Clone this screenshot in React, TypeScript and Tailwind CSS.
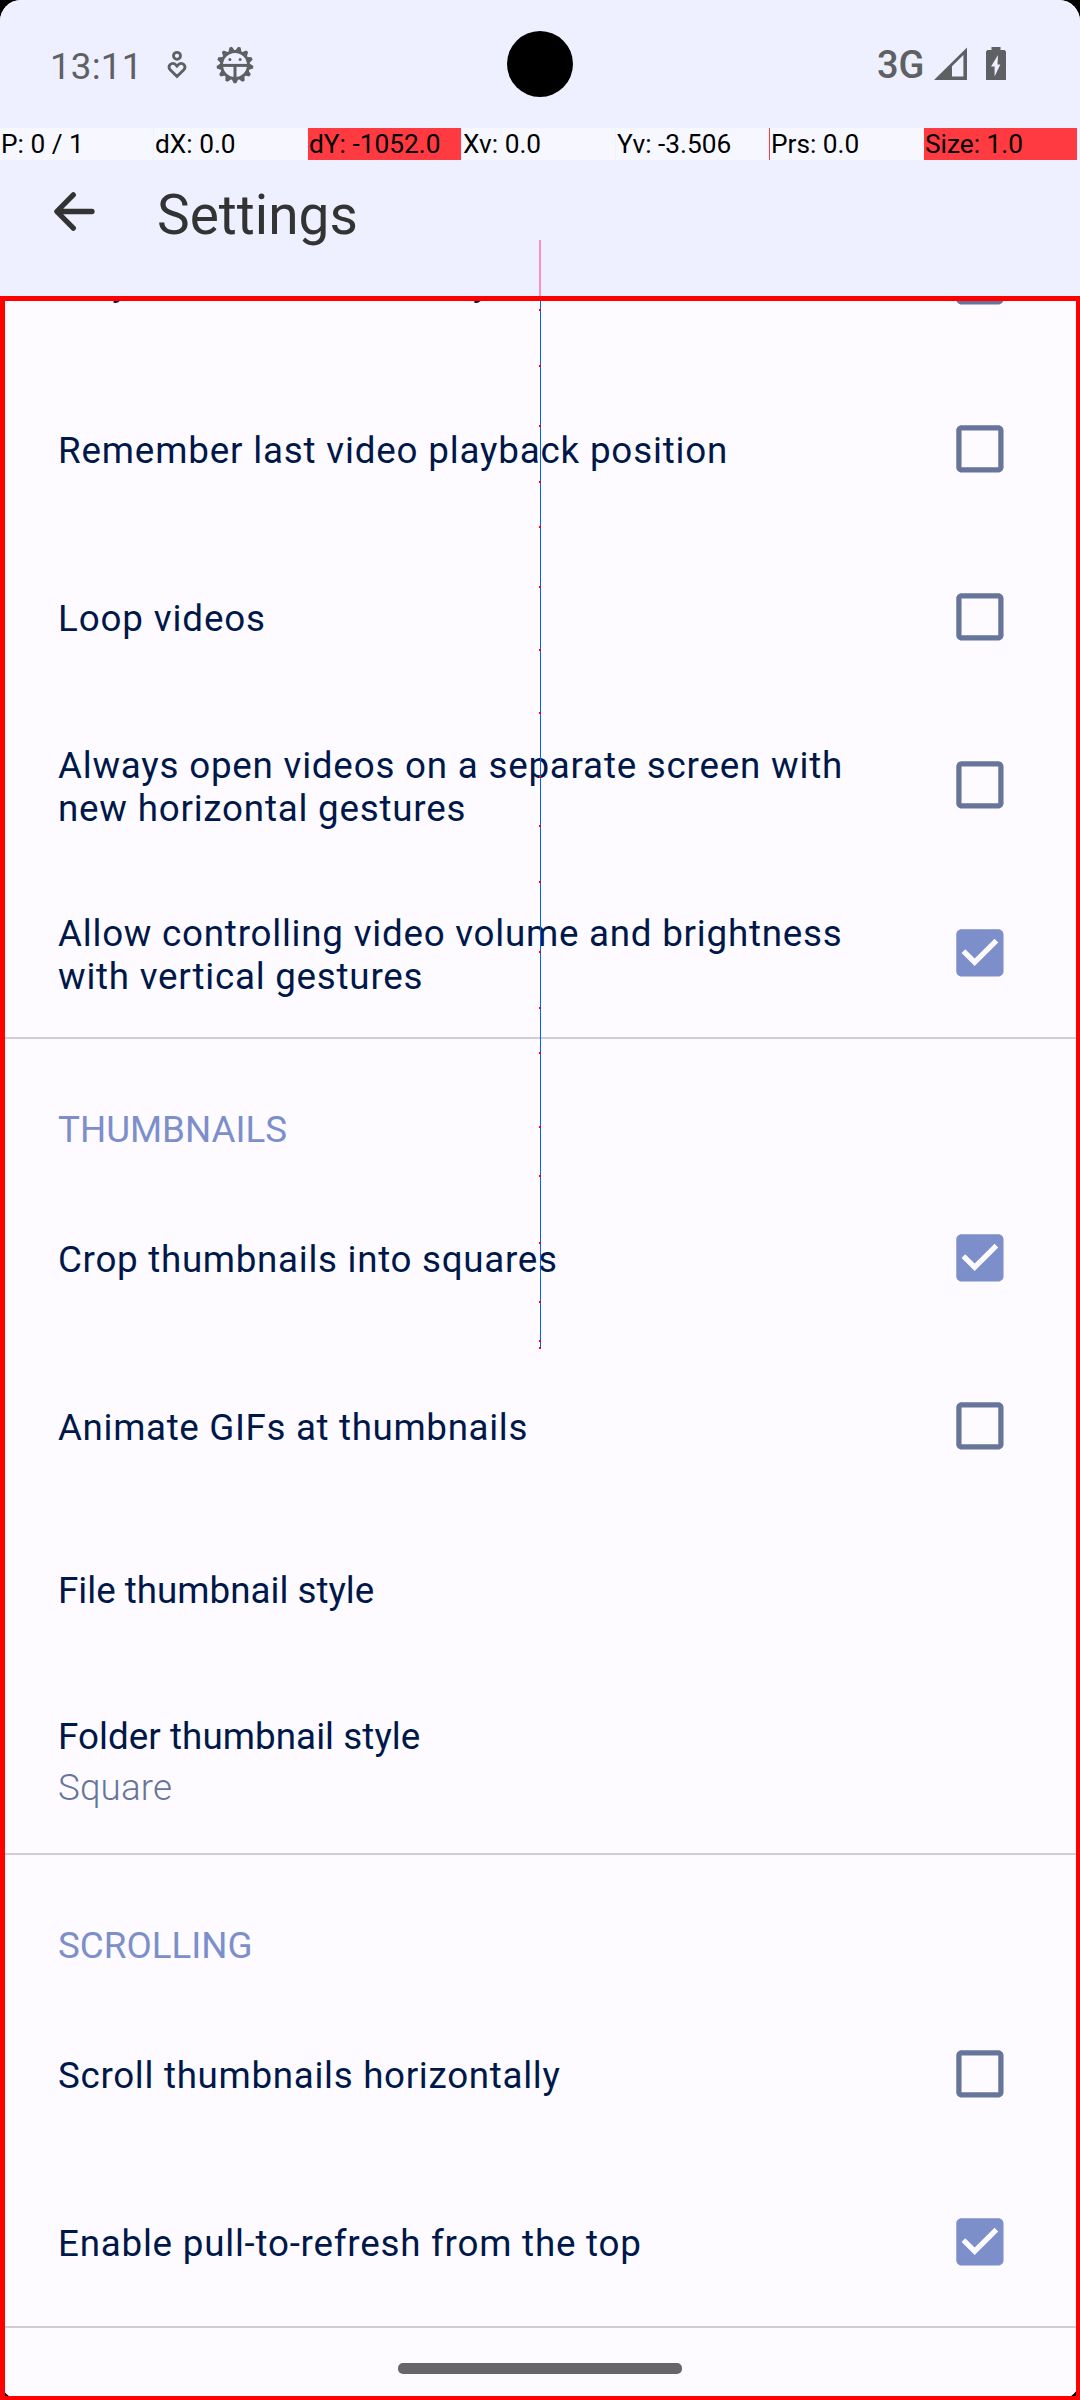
import React from 'react';

type Option = { lines: string[]; checked: boolean; spacing: string };

const videoOptions: Option[] = [
  { lines: ['Play videos automatically'], checked: false, spacing: 'tracking-[0.72px]' },
  { lines: ['Remember last video playback position'], checked: false, spacing: 'tracking-[0.82px]' },
  { lines: ['Loop videos'], checked: false, spacing: 'tracking-[0.87px]' },
  {
    lines: ['Always open videos on a separate screen with', 'new horizontal gestures'],
    checked: false,
    spacing: 'tracking-[0.78px]',
  },
  {
    lines: ['Allow controlling video volume and brightness', 'with vertical gestures'],
    checked: true,
    spacing: 'tracking-[0.76px]',
  },
];

const thumbnailOptions: Option[] = [
  { lines: ['Crop thumbnails into squares'], checked: true, spacing: 'tracking-[0.7px]' },
  { lines: ['Animate GIFs at thumbnails'], checked: false, spacing: 'tracking-[0.65px]' },
];

const scrollingOptions: Option[] = [
  { lines: ['Scroll thumbnails horizontally'], checked: false, spacing: 'tracking-[0.69px]' },
  { lines: ['Enable pull-to-refresh from the top'], checked: true, spacing: 'tracking-[0.77px]' },
];

const readings = [
  { text: 'P: 0 / 1', hot: false },
  { text: 'dX: 0.0', hot: false },
  { text: 'dY: -1052.0', hot: true },
  { text: 'Xv: 0.0', hot: false },
  { text: 'Yv: -3.506', hot: false },
  { text: 'Prs: 0.0', hot: false },
  { text: 'Size: 1.0', hot: true },
];

// Sample positions along the pointer trail, in screen pixels.
const trail = [
  310, 366, 426, 482, 527, 587, 650, 713, 777, 826, 882, 952, 1008, 1053, 1127, 1176, 1243, 1302, 1341, 1348,
];

function gearPath() {
  const teeth = 13;
  const points: string[] = [];
  for (let i = 0; i < teeth; i++) {
    const centre = Math.PI / 2 + (i * 2 * Math.PI) / teeth;
    for (const [offset, radius] of [
      [-0.2, 15],
      [-0.07, 18.4],
      [0.07, 18.4],
      [0.2, 15],
    ]) {
      points.push(
        `${(19 + radius * Math.cos(centre + offset)).toFixed(2)} ${(19 + radius * Math.sin(centre + offset)).toFixed(2)}`,
      );
    }
  }
  return `M${points.join('L')}Z`;
}

function Checkbox({ checked }: { checked: boolean }) {
  return (
    <svg
      viewBox="-0.152 -0.152 24.381 24.381"
      className={checked ? 'size-16 shrink-0 fill-[#7c8fca]' : 'size-16 shrink-0 fill-[#667599]'}
    >
      <path
        d={
          checked
            ? 'M19 3H5c-1.11 0-2 .9-2 2v14c0 1.1.89 2 2 2h14c1.11 0 2-.9 2-2V5c0-1.1-.89-2-2-2zm-9 14l-5-5 1.41-1.41L10 14.17l7.59-7.59L19 8l-9 9z'
            : 'M19 5v14H5V5h14m0-2H5c-1.1 0-2 .9-2 2v14c0 1.1.9 2 2 2h14c1.1 0 2-.9 2-2V5c0-1.1-.9-2-2-2z'
        }
      />
    </svg>
  );
}

function OptionRow({ lines, checked, spacing }: Option) {
  return (
    <label className="flex h-[168px] items-center justify-between pr-[68px] pl-[58px]">
      <span className={`pt-[3px] whitespace-nowrap ${spacing}`}>
        {lines.map((line) => (
          <span key={line} className="block">
            {line}
          </span>
        ))}
      </span>
      <Checkbox checked={checked} />
    </label>
  );
}

function SectionTitle({ children }: { children: string }) {
  return <h2 className="h-[135px] pt-[69px] pl-[58px] text-[#7c8fca]">{children}</h2>;
}

function Divider() {
  return <div className="h-[2px] bg-[#cfced2]" />;
}

function StatusBar() {
  return (
    <div className="relative flex h-32 items-start text-[36.75px] leading-[43px] text-[#5f6064]">
      <span className="mt-[45px] ml-[50px] tracking-[0.2px]">13:11</span>
      <svg className="mt-[50px] ml-[23.5px] h-[30px] w-[22px]" viewBox="0 0 22 30" fill="none" stroke="#5f6064" strokeWidth="2.8">
        <circle cx="11" cy="5.8" r="3.5" />
        <path d="M11 26.6l-6.8-6.8a4 4 0 0 1 0-5.3c1.6-1.6 4-1.5 5.4.1L11 16.2l1.4-1.6c1.4-1.6 3.8-1.7 5.4-.1a4 4 0 0 1 0 5.3z" />
      </svg>
      <svg className="mt-[46px] ml-[28px] size-[38px]" viewBox="0 0 38 38">
        <path d={gearPath()} fill="#5f6064" />
        <circle cx="19" cy="19" r="12" fill="#eef0ff" />
        <rect x="5" y="17.9" width="28" height="3" fill="#5f6064" />
        <rect x="17.5" y="20" width="3" height="13" fill="#5f6064" />
        <circle cx="13.9" cy="13.4" r="1.5" fill="#5f6064" />
        <circle cx="24.1" cy="13.4" r="1.5" fill="#5f6064" />
      </svg>
      <div className="absolute top-[31px] left-[507px] size-[66px] rounded-full bg-black" />
      <span className="mt-[44px] ml-auto text-[38px] font-medium">3G</span>
      <svg className="mt-[47px] ml-[9.5px] h-[33px] w-[33px]" viewBox="0 0 33 33" fill="#5f6064" fillRule="evenodd">
        <path d="M0 33L33 0.5V33zM18 19.3V29.5H29.4V8z" />
      </svg>
      <svg className="mt-[47px] mr-[74px] ml-[19px] h-[33px] w-5" viewBox="0 0 20 33" fill="#5f6064" fillRule="evenodd">
        <path d="M5.5 0h9v3H18.5L20 4.5V33H0V4.5L1.5 3H5.5zM12 8L5 19.5H8.6V29.5L14.3 17.5H11.5z" />
      </svg>
    </div>
  );
}

function PointerReadout() {
  return (
    <div className="flex h-8 gap-px text-[26.25px] leading-8 text-black">
      {readings.map(({ text, hot }) => (
        <div
          key={text}
          className={
            hot
              ? 'w-[153px] bg-[#ff3a40] pl-[1px] whitespace-nowrap'
              : 'w-[153px] bg-[#f7f8ff] pl-[1px] whitespace-nowrap'
          }
        >
          {text}
        </div>
      ))}
    </div>
  );
}

function PointerTrail() {
  return (
    <>
      <div className="absolute top-[240px] left-[539px] h-[56px] w-[2px] bg-[#fb90bf]" />
      <div className="absolute top-[301px] left-[540px] h-[1046px] w-px bg-[#0060ff]" />
      {trail.map((y) => (
        <div key={y} className="absolute left-[539px] size-[2px] bg-[#ff0000]" style={{ top: y - 1 }} />
      ))}
      <div className="absolute top-[128px] left-[769px] h-8 w-px bg-[#ff3a40]" />
    </>
  );
}

export default function App() {
  return (
    <div className="relative h-[2400px] w-[1080px] overflow-hidden bg-black font-['Roboto',sans-serif]">
      <div className="flex h-full flex-col overflow-hidden rounded-[21px] bg-[#fdfbff]">
        <header className="h-[296px] shrink-0 bg-[#eef0ff]">
          <StatusBar />
          <PointerReadout />
          <div className="flex h-[110px] items-center pl-[52px]">
            <svg
              className="-mt-[8px] size-[46px]"
              viewBox="0 0 46 46"
              fill="none"
              stroke="#333333"
              strokeWidth="5.3"
              strokeLinecap="round"
              strokeLinejoin="round"
            >
              <path d="M40 23.5H5M21.3 6.8L4.8 23.5l16.5 16.7" />
            </svg>
            <h1 className="ml-[59px] text-[55px] leading-[64px] text-[#333333]">Settings</h1>
          </div>
        </header>
        <main className="min-h-0 flex-1 overflow-hidden text-[36.75px] leading-[43px] text-[#001849]">
          <div className="-mt-[99px]">
            {videoOptions.map((o) => (
              <OptionRow key={o.lines[0]} {...o} />
            ))}
            <Divider />
            <SectionTitle>THUMBNAILS</SectionTitle>
            {thumbnailOptions.map((o) => (
              <OptionRow key={o.lines[0]} {...o} />
            ))}
            <div className="h-[161px] pt-[59px] pl-[58px]">File thumbnail style</div>
            <div className="flex h-[182px] flex-col gap-[8px] pt-[44px] pl-[58px]">
              <span className="tracking-[0.06px]">Folder thumbnail style</span>
              <span className="font-light tracking-[0.15px] text-[#667599]">Square</span>
            </div>
            <Divider />
            <SectionTitle>SCROLLING</SectionTitle>
            {scrollingOptions.map((o) => (
              <OptionRow key={o.lines[0]} {...o} />
            ))}
            <Divider />
          </div>
        </main>
      </div>
      <div className="absolute top-[2363px] left-[398px] h-[11px] w-[284px] rounded-[5px] bg-[#666568]" />
      <PointerTrail />
      <div className="pointer-events-none absolute inset-x-0 top-[296px] bottom-0 border-t-[5px] border-r-[4px] border-b-[4px] border-l-[5px] border-[#ff0000]" />
    </div>
  );
}
